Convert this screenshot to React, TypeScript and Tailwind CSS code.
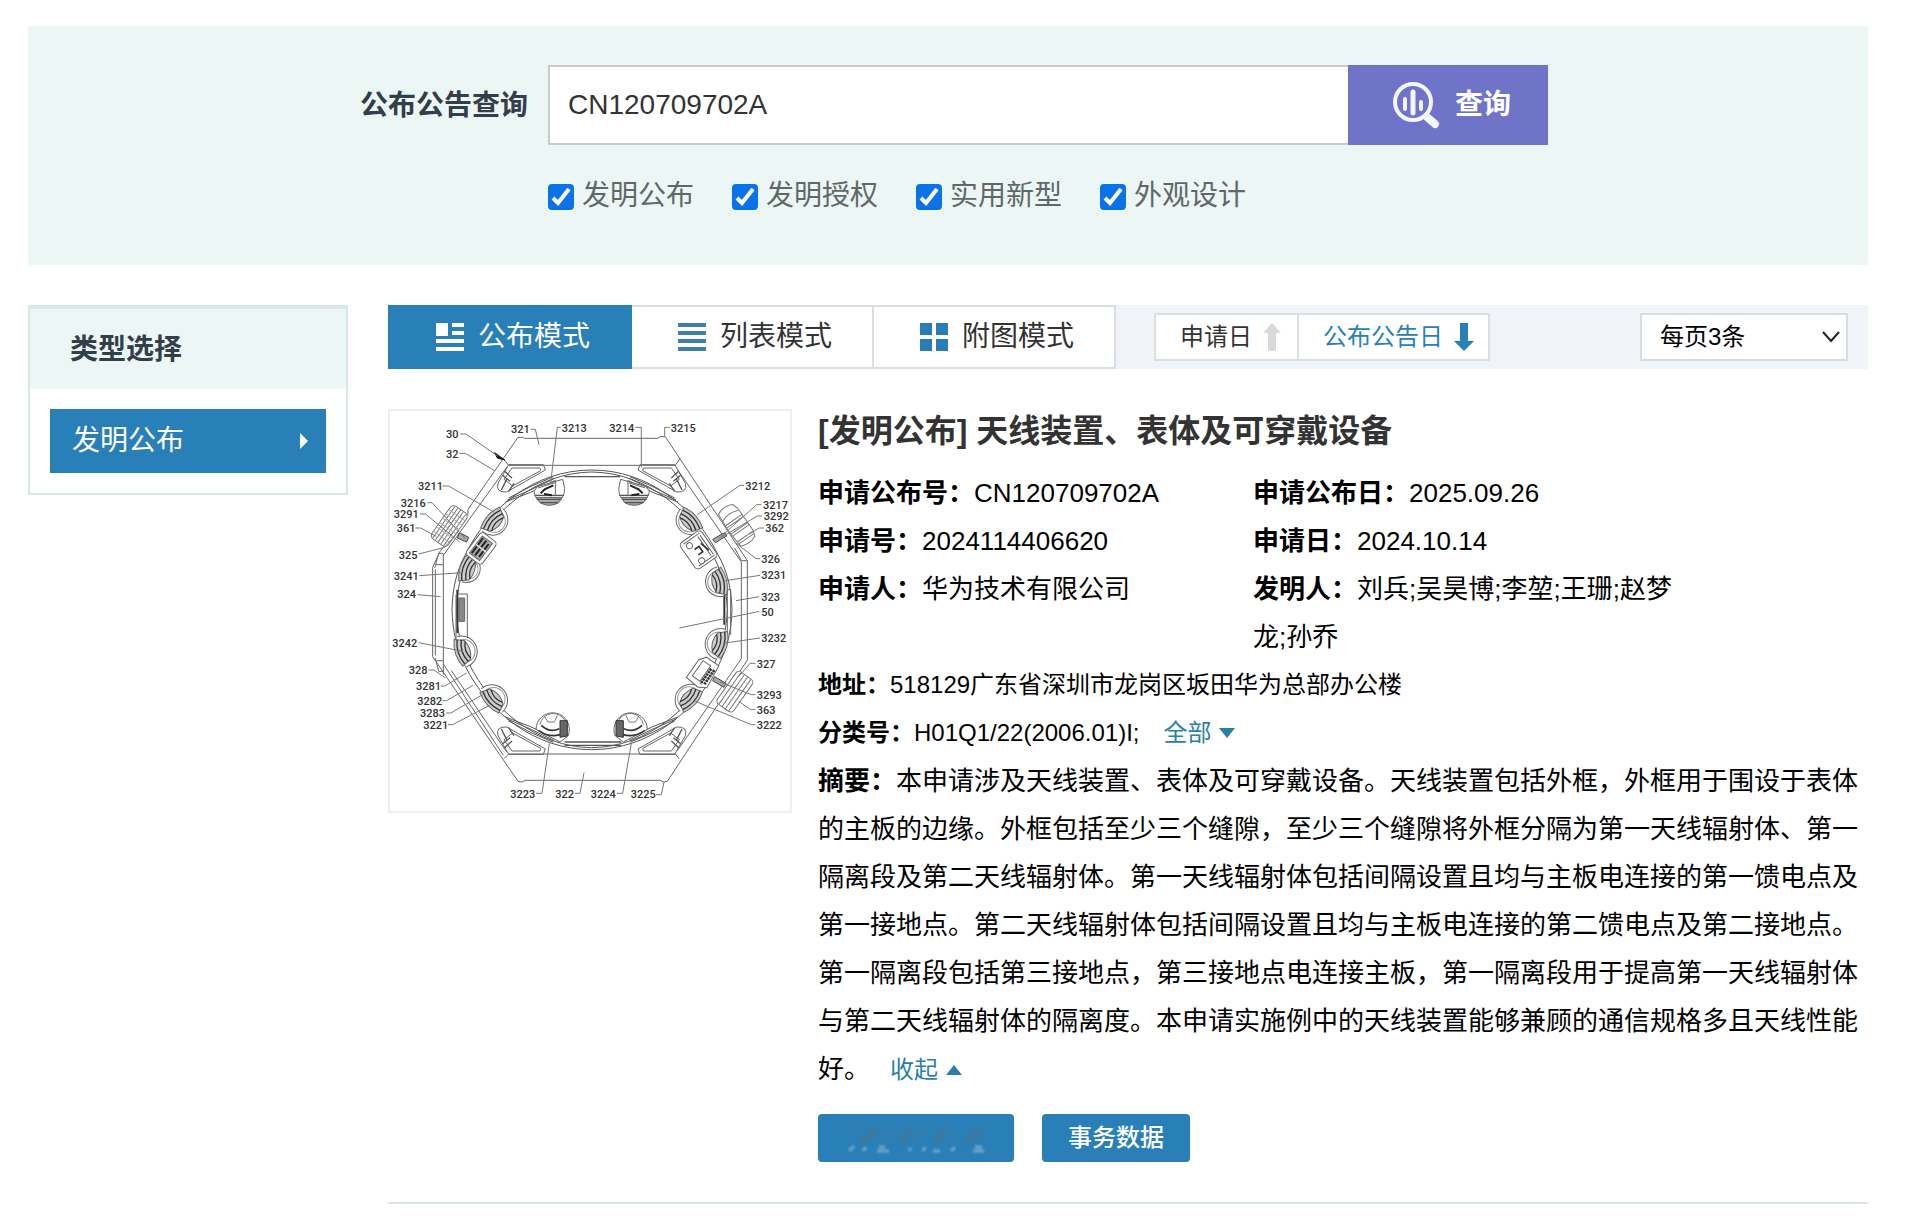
import React, { useState } from "react";

const CX = 611;
const CY = 605;

// x, baseline, text, leader line
const callouts: [number, number, string, string][] = [
  [174, 90, "30", "M216 78 H234 L330 145"],
  [174, 149, "32", "M214 136 H232 L320 188"],
  [369, 76, "321", "M428 64 H442 L453 110"],
  [521, 72, "3213", "M518 58 H508 L488 225"],
  [664, 72, "3214", "M742 58 H760 V178"],
  [848, 72, "3215", "M845 58 H830 V86"],
  [90, 246, "3211", "M164 234 H182 L318 312"],
  [38, 296, "3216", "M118 284 H132 L232 392"],
  [17, 331, "3291", "M96 318 H112 L215 402"],
  [26, 373, "361", "M82 360 H98 L145 385"],
  [32, 452, "325", "M92 438 L170 418 L212 370"],
  [17, 516, "3241", "M94 503 L222 494"],
  [28, 570, "324", "M88 560 L158 566"],
  [13, 717, "3242", "M92 704 L225 730"],
  [62, 797, "328", "M122 786 H138 L172 810"],
  [84, 846, "3281", "M158 834 H170 L236 795"],
  [88, 891, "3282", "M164 878 H176 L255 832"],
  [96, 927, "3283", "M174 915 H188 L284 860"],
  [106, 963, "3221", "M180 950 H194 L305 892"],
  [367, 1169, "3223", "M444 1156 H462 L484 1006"],
  [502, 1169, "322", "M560 1156 H576 L588 1094"],
  [608, 1169, "3224", "M686 1156 H704 L730 1006"],
  [728, 1171, "3225", "M804 1160 H820 L828 1122"],
  [1072, 246, "3212", "M1068 232 H1056 L928 320"],
  [1125, 302, "3217", "M1120 290 H1106 L992 392"],
  [1127, 337, "3292", "M1122 324 H1108 L1000 388"],
  [1132, 371, "362", "M1128 360 H1114 L1084 378"],
  [1120, 465, "326", "M1116 452 H1104 L1040 402"],
  [1120, 514, "3231", "M1116 502 L1012 518"],
  [1120, 578, "323", "M1114 566 L1044 578"],
  [1120, 623, "50", "M1114 610 L874 660"],
  [1120, 702, "3232", "M1116 690 L1005 706"],
  [1106, 780, "327", "M1102 766 H1086 L1052 806"],
  [1106, 872, "3293", "M1102 860 H1090 L996 822"],
  [1106, 918, "363", "M1102 905 H1088 L1052 880"],
  [1106, 964, "3222", "M1102 950 H1090 L922 880"],
];

const pods: [number, number, number][] = [
  [324, 345, 46],
  [248, 486, 42],
  [898, 345, 44],
  [984, 524, 45],
  [234, 727, 47],
  [322, 868, 47],
  [985, 705, 47],
  [898, 866, 47],
];

const mirrors = [
  "translate(0 0)",
  "translate(1222 0) scale(-1 1)",
  "translate(0 1209) scale(1 -1)",
  "translate(1222 1209) scale(-1 -1)",
];

const Pod = ({ x, y, r }: { x: number; y: number; r: number }) => {
  const angle = (Math.atan2(y - CY, x - CX) * 180) / Math.PI + 90;
  return (
    <g transform={`translate(${x} ${y}) rotate(${angle})`}>
      <path d={`M${-r} -14 A${r} ${r} 0 1 0 ${r} -14`} fill="#fff" />
      <path d={`M${12 - r} -8 A${r - 12} ${r - 12} 0 0 0 ${r - 12} -8`} stroke="#999" />
      <path d="M-42 -24 Q0 -42 42 -24 L30 4 Q0 20 -30 4 Z" fill="#ccc" />
      <path d="M-38 -16 Q0 -32 38 -16 M-34 -4 Q0 -20 34 -4 M-26 6 Q0 -8 26 6" stroke="#333" strokeWidth="4" />
    </g>
  );
};

const PatentFigure = () => (
  <svg viewBox="6 9 1200 1200" className="block w-full" fill="none" stroke="#666" strokeWidth="3">
    {/* outer frame */}
    <path d="M410 91 H810 L816 86 H832 L1078 458 V756 L838 1120 Q828 1126 816 1117 H412 Q402 1126 390 1120 L134 746 V478 L155 432 L240 318 V304 L390 88 H404 Z" />
    <path d="M142 484 V742 M166 438 V800 M152 436 H166 M144 470 H166 M152 436 L140 480 M146 758 H166 M152 790 L142 750 M152 790 H166 M1060 462 V752 M1078 458 H1060 L1040 420" />
    <path d="M346 152 L362 172 H862 L876 152 M166 442 L356 178 M1060 462 L868 184 M166 768 L346 1042 M190 788 L356 1032 M1060 752 L868 1028" />
    <path d="M348 1052 L362 1038 H862 L874 1052" />

    {/* corner brackets */}
    {mirrors.map((m) => (
      <g key={m} transform={m}>
        <path d="M362 170 H466 L472 186 L356 252 Q322 254 330 226 Z" />
        <path d="M372 180 H456 L458 188 L374 234 L348 214 Z" />
        <path d="M350 190 L372 210 M344 202 L366 220 M356 214 L340 246 M378 226 L362 250" stroke="#555" strokeWidth="4" />
        <path d="M352 282 Q430 256 500 218 M362 270 Q430 232 496 206 M358 276 Q430 246 498 212" stroke="#555" />
      </g>
    ))}

    {/* ring */}
    <g stroke="#555">
      <path d="M192 605 C194 540 205 490 232 440 C300 300 440 186 611 186 C782 186 922 300 990 440 C1018 490 1030 540 1032 605 C1030 670 1018 720 990 775 C922 912 782 1025 611 1025 C440 1025 300 912 232 775 C205 720 194 670 192 605 Z" />
      <path d="M206 605 C207 550 216 500 242 452 C308 310 445 194 611 192 C778 194 914 310 980 452 C1004 500 1016 550 1018 605 C1016 660 1004 715 980 765 C914 900 778 1017 611 1019 C445 1017 308 900 242 765 C216 715 207 660 206 605 Z" />
      <path d="M530 206 H696 M530 1002 H700 M530 1012 H700" strokeWidth="4" />
    </g>
    <path d="M208 545 V675 M1009 560 V650" stroke="#333" strokeWidth="6" />
    <path d="M212 558 H238 V690 H212 M204 560 V700 M1018 545 V680 M1028 545 V680 M1012 545 H1028" />
    <path d="M212 570 H230 V640 H212 Z" fill="#888" />

    {pods.map(([x, y, r]) => (
      <Pod key={`${x}-${y}`} x={x} y={y} r={r} />
    ))}

    {/* upper bowls */}
    {mirrors.slice(0, 2).map((m) => (
      <g key={m} transform={m}>
        <path d="M438 250 A46 46 0 1 0 528 232 L524 214 L448 236 Z" fill="#fff" />
        <path d="M444 268 H522 L512 284 Q484 300 456 284 Z" fill="#aaa" />
        <path d="M440 262 H528 M446 274 H520 M456 284 H510" stroke="#555" strokeWidth="4" />
        <path d="M502 216 V262 M450 240 L500 224" />
        <path d="M458 256 L470 244 L496 232 M468 258 L492 262" stroke="#222" strokeWidth="6" />
      </g>
    ))}

    {/* lower domes */}
    {mirrors.slice(0, 2).map((m) => (
      <g key={m} transform={m}>
        <path d="M444 964 A50 50 0 1 1 540 984 L516 1002 Z" fill="#fff" />
        <path d="M456 950 A40 40 0 0 1 532 940 M470 926 L480 942 M508 922 L500 940 M480 942 H500" stroke="#777" />
        <path d="M516 938 H538 V984 L516 988 Z" fill="#666" stroke="#333" />
        <path d="M460 952 Q485 976 514 962 M452 968 Q484 990 516 980" stroke="#333" strokeWidth="5" />
      </g>
    ))}

    {/* connectors */}
    <g transform="translate(278 420) rotate(37)" fill="#fff">
      <rect x="-28" y="-42" width="60" height="84" rx="12" />
      <path d="M-18 -32 V32 H20 V-32 Z" fill="#aaa" />
      <path d="M-12 -28 V28 M0 -28 V28 M12 -24 V24" stroke="#222" strokeWidth="6" />
      <path d="M-18 0 H20" stroke="#ddd" strokeWidth="5" />
    </g>
    <g transform="translate(932 428) rotate(-35)" fill="#fff">
      <rect x="-38" y="-50" width="78" height="96" rx="12" />
      <path d="M-26 -42 H32 M-26 38 H32 M30 -36 V34 M22 -36 V34" />
      <circle cx="-14" cy="-28" r="9" />
      <circle cx="-10" cy="30" r="9" />
      <path d="M-8 -10 H8 V10 H-8 M18 -14 L26 16" stroke="#333" strokeWidth="5" />
    </g>
    <g transform="translate(946 795) rotate(35)" fill="#fff">
      <path d="M-34 -24 L-20 -44 H26 L34 30 L10 44 L-34 40 Z" />
      <path d="M-22 -30 H6 V26 H-22 Z" />
      <path d="M12 -24 V32 M22 -26 V28" stroke="#333" strokeWidth="8" strokeDasharray="7 2" />
    </g>

    {/* crowns */}
    <g transform="translate(184 354) rotate(35)" stroke="#777">
      <rect x="-30" y="-60" width="60" height="120" rx="14" fill="#fff" />
      <path d="M-20 -56 V56 M-10 -58 V58 M0 -60 V60 M10 -58 V58 M20 -56 V56" />
      <path d="M-30 -40 H30 M-30 -24 H30 M-30 -8 H30 M-30 8 H30 M-30 24 H30 M-30 40 H30" stroke="#aaa" />
    </g>
    <g transform="translate(1046 352) rotate(-35)" stroke="#777">
      <path d="M-26 -58 Q0 -72 26 -58 L32 -40 V40 L26 58 Q0 70 -26 58 L-30 0 Z" fill="#fff" />
      <path d="M-28 -34 Q0 -46 30 -34 M-28 -18 H32 M-28 -10 H32 M-28 12 H32 M-28 20 H32 M-26 42 H30 M-26 50 H28" />
    </g>
    <g transform="translate(1040 852) rotate(35)" stroke="#777">
      <rect x="-30" y="-60" width="60" height="118" rx="12" fill="#fff" />
      <path d="M-18 -58 V56 M-6 -60 V58 M6 -60 V58 M18 -58 V56" />
    </g>
    <path d="M214 374 L242 388 L236 402 L208 390 Z M974 394 L1010 374 L1016 384 L982 404 Z M980 806 L1014 826 L1008 838 L974 818 Z" stroke="#444" fill="#aaa" />

    <path d="M320 134 L350 156 L328 150 Z" fill="#111" stroke="#111" />
    {callouts.map(([, , label, line]) => (
      <path key={label} d={line} stroke="#777" />
    ))}
    <g stroke="none" fill="#333" fontFamily="Roboto, sans-serif" fontSize="33" fontWeight="500">
      {callouts.map(([x, y, label]) => (
        <text key={label} x={x} y={y}>
          {label}
        </text>
      ))}
    </g>
  </svg>
);

const SearchIcon = () => (
  <svg viewBox="0 0 48 48" className="h-12 w-12" fill="none" stroke="#f4f6ff" strokeLinecap="round">
    <circle cx="21" cy="21" r="18" strokeWidth="4" />
    <path d="M35 36 L43 43" strokeWidth="8" />
    <path d="M13 18 V28 M29 21 V28" strokeWidth="4" />
    <path d="M21 11 V32" strokeWidth="5" />
  </svg>
);

const PublishIcon = () => (
  <svg viewBox="0 0 28 28" className="h-7 w-7" fill="currentColor">
    <path d="M0 0 H12 V13 H0 Z M16 0 H28 V4 H16 Z M16 8 H28 V12 H16 Z M0 16 H28 V20 H0 Z M0 24 H28 V28 H0 Z" />
  </svg>
);

const ListIcon = () => (
  <svg viewBox="0 0 28 28" className="h-7 w-7 text-[#3d80ad]" fill="currentColor">
    <path d="M0 0 H28 V4 H0 Z M0 8 H28 V12 H0 Z M0 16 H28 V20 H0 Z M0 24 H28 V28 H0 Z" />
  </svg>
);

const GridIcon = () => (
  <svg viewBox="0 0 28 28" className="h-7 w-7 text-[#2a7db5]" fill="currentColor">
    <path d="M0 0 H12 V12 H0 Z M16 0 H28 V12 H16 Z M0 16 H12 V28 H0 Z M16 16 H28 V28 H16 Z" />
  </svg>
);

const types = ["发明公布", "发明授权", "实用新型", "外观设计"];

const Field = ({ label, children }: { label: string; children: React.ReactNode }) => (
  <p>
    <b>{label}：</b>
    {children}
  </p>
);

const App = () => {
  const [keyword, setKeyword] = useState("CN120709702A");

  return (
    <div className="min-h-screen bg-white pt-[26px] pr-11 pb-7 pl-7 font-['Liberation_Sans','Noto_Sans_CJK_SC',sans-serif] text-black">
      {/* Search */}
      <form className="flex justify-center gap-5 bg-[#ecf6f5] pt-[39px] pb-[49px] pl-3" onSubmit={(e) => e.preventDefault()}>
        <label htmlFor="keyword" className="text-[28px] leading-[82px] font-bold text-[#333e4b]">
          公布公告查询
        </label>
        <div className="w-[1000px]">
          <div className="flex h-20">
            <input
              id="keyword"
              type="text"
              value={keyword}
              onChange={(e) => setKeyword(e.target.value)}
              className="min-w-0 flex-1 border-2 border-r-0 border-[#c8cccc] bg-white px-[18px] text-[28px] text-[#333] outline-none"
            />
            <button type="submit" className="flex w-[200px] items-center gap-[15px] bg-[#6f74c8] pl-11 text-[28px] font-bold text-white">
              <SearchIcon />
              查询
            </button>
          </div>
          <div className="mt-[31px] flex gap-[38px]">
            {types.map((t) => (
              <label key={t} className="flex items-center gap-2 text-[28px] leading-10 text-[#5f6868]">
                <span className="relative mt-[2px] h-[26px] w-[26px]">
                  <input type="checkbox" defaultChecked className="peer block h-[26px] w-[26px] appearance-none rounded border-2 border-gray-400 bg-white checked:border-[#0b72e7] checked:bg-[#0b72e7]" />
                  <svg viewBox="0 0 26 26" className="pointer-events-none absolute inset-0 hidden peer-checked:block" fill="none" stroke="#fff" strokeWidth="4">
                    <path d="M5 14 L10 19 L21 5" />
                  </svg>
                </span>
                {t}
              </label>
            ))}
          </div>
        </div>
      </form>

      <div className="mt-10 flex items-start gap-10">
        {/* Sidebar */}
        <aside className="w-80 shrink-0 border-2 border-t-4 border-[#d8e6ea]">
          <h2 className="bg-[#ecf6f5] px-10 pt-[2px] text-[28px] leading-[78px] font-bold text-[#333e4b]">类型选择</h2>
          <div className="p-5">
            <a href="#publish" className="flex h-16 items-center justify-between bg-[#297fb8] pr-[18px] pl-[22px] text-[28px] leading-[64px] text-white">
              发明公布
              <svg viewBox="0 0 8 16" className="h-4 w-2" fill="currentColor">
                <path d="M0 0 L8 8 L0 16 Z" />
              </svg>
            </a>
          </div>
        </aside>

        <main className="min-w-0 flex-1">
          {/* Toolbar */}
          <div className="flex h-16 items-center bg-[#f0f4f9]">
            <button type="button" className="flex h-16 w-[244px] items-center gap-[14px] bg-[#297fb8] pl-[48px] text-[28px] text-white">
              <PublishIcon />
              公布模式
            </button>
            <button type="button" className="flex h-16 w-[242px] items-center gap-[14px] border-y-2 border-r-2 border-[#dcdfe1] bg-white pl-[46px] text-[28px] text-[#333]">
              <ListIcon />
              列表模式
            </button>
            <button type="button" className="flex h-16 w-[242px] items-center gap-[14px] border-y-2 border-r-2 border-[#dcdfe1] bg-white pl-[46px] text-[28px] text-[#333]">
              <GridIcon />
              附图模式
            </button>
            <button type="button" className="ml-[38px] flex h-12 items-center gap-[11px] border-2 border-[#dcdfe1] bg-white pr-4 pl-6 text-[24px] text-[#333]">
              申请日
              <svg viewBox="0 0 18 28" className="h-7 w-[18px]" fill="#d8dadb">
                <path d="M9 0 L18 10 H13 V28 H5 V10 H0 Z" />
              </svg>
            </button>
            <button type="button" className="flex h-12 items-center gap-[11px] border-2 border-l-0 border-[#dcdfe1] bg-white pr-[14px] pl-6 text-[24px] text-[#297fb8]">
              公布公告日
              <svg viewBox="0 0 20 28" className="h-7 w-5" fill="currentColor">
                <path d="M6 0 H14 V18 H20 L10 28 L0 18 H6 Z" />
              </svg>
            </button>
            <div className="relative mr-5 ml-auto">
              <select aria-label="每页3条" className="block h-12 w-52 appearance-none border-2 border-[#d8dcdf] bg-white px-[18px] text-[24px] text-black">
                <option>每页3条</option>
              </select>
              <svg viewBox="0 0 18 12" className="pointer-events-none absolute top-[18px] right-2 h-3 w-[18px]" fill="none" stroke="#222" strokeWidth="2">
                <path d="M1 1 L9 10 L17 1" />
              </svg>
            </div>
          </div>

          {/* Result */}
          <article className="mt-10 flex items-start gap-[26px] border-b-2 border-[#d9e5ea] pb-10">
            <div className="w-[404px] shrink-0 border-2 border-[#eee]">
              <PatentFigure />
            </div>
            <div className="min-w-0 flex-1 text-[26px] leading-[48px]">
              <h1 className="mb-[18px] pt-[2px] text-[32px] leading-10 font-bold text-[#333]">[发明公布] 天线装置、表体及可穿戴设备</h1>
              <div className="grid grid-cols-[435px_435px]">
                <Field label="申请公布号">CN120709702A</Field>
                <Field label="申请公布日">2025.09.26</Field>
                <Field label="申请号">2024114406620</Field>
                <Field label="申请日">2024.10.14</Field>
                <Field label="申请人">华为技术有限公司</Field>
                <Field label="发明人">刘兵;吴昊博;李堃;王珊;赵梦龙;孙乔</Field>
              </div>
              <div className="text-[24px] leading-[48px]">
                <Field label="地址">518129广东省深圳市龙岗区坂田华为总部办公楼</Field>
                <Field label="分类号">
                  H01Q1/22(2006.01)I;
                  <a href="#all" className="ml-6 inline-flex items-center gap-2 text-[#297fa8]">
                    全部
                    <svg viewBox="0 0 16 10" className="h-[10px] w-4" fill="currentColor">
                      <path d="M0 0 H16 L8 10 Z" />
                    </svg>
                  </a>
                </Field>
              </div>
              <Field label="摘要">
                本申请涉及天线装置、表体及可穿戴设备。天线装置包括外框，外框用于围设于表体的主板的边缘。外框包括至少三个缝隙，至少三个缝隙将外框分隔为第一天线辐射体、第一隔离段及第二天线辐射体。第一天线辐射体包括间隔设置且均与主板电连接的第一馈电点及第一接地点。第二天线辐射体包括间隔设置且均与主板电连接的第二馈电点及第二接地点。第一隔离段包括第三接地点，第三接地点电连接主板，第一隔离段用于提高第一天线辐射体与第二天线辐射体的隔离度。本申请实施例中的天线装置能够兼顾的通信规格多且天线性能好。
                <a href="#less" className="ml-5 inline-flex items-center gap-2 text-[24px] text-[#297fa8]">
                  收起
                  <svg viewBox="0 0 16 10" className="h-[10px] w-4" fill="currentColor">
                    <path d="M0 10 H16 L8 0 Z" />
                  </svg>
                </a>
              </Field>
              <div className="mt-5 flex gap-7">
                <button type="button" className="flex h-12 w-[196px] items-center justify-center rounded bg-[#297fb8]">
                  <svg viewBox="0 0 146 32" className="h-8 w-[146px] blur-[1px]" fill="none" strokeWidth="3">
                    <path d="M4 6 H140 M10 13 H134 M30 19 H120" stroke="#4a7f9c" strokeDasharray="5 3 9 4 3 6" opacity="0.4" />
                    <path d="M16 22 L34 8 M58 22 L66 8 M92 20 L104 6 M122 22 L138 10" stroke="#56707f" strokeWidth="6" opacity="0.4" />
                    <path d="M6 29 L11 24 M20 29 L23 25 M34 29 H46 M36 25 H42 M66 29 L68 26 M80 29 L82 25 M90 29 H97 M108 29 L112 25 M130 29 H141 M132 25 H139" stroke="#8ab2c6" opacity="0.8" />
                  </svg>
                </button>
                <button type="button" className="h-12 w-[148px] rounded bg-[#297fb8] text-[24px] leading-[48px] font-medium text-white">
                  事务数据
                </button>
              </div>
            </div>
          </article>
        </main>
      </div>
    </div>
  );
};

export default App;
